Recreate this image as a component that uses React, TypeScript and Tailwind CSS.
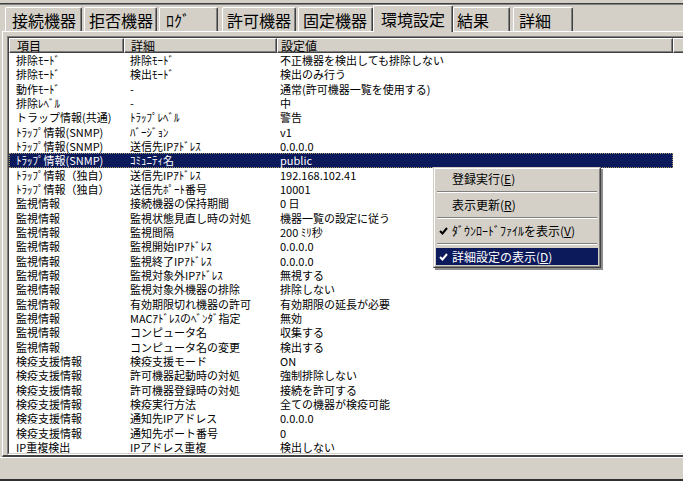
import React from 'react';

const rows: [string, string, string][] = [
  ['排除ﾓｰﾄﾞ', '排除ﾓｰﾄﾞ', '不正機器を検出しても排除しない'],
  ['排除ﾓｰﾄﾞ', '検出ﾓｰﾄﾞ', '検出のみ行う'],
  ['動作ﾓｰﾄﾞ', '-', '通常(許可機器一覧を使用する)'],
  ['排除ﾚﾍﾞﾙ', '-', '中'],
  ['トラップ情報(共通)', 'ﾄﾗｯﾌﾟﾚﾍﾞﾙ', '警告'],
  ['ﾄﾗｯﾌﾟ情報(SNMP)', 'ﾊﾞｰｼﾞｮﾝ', 'v1'],
  ['ﾄﾗｯﾌﾟ情報(SNMP)', '送信先IPｱﾄﾞﾚｽ', '0.0.0.0'],
  ['ﾄﾗｯﾌﾟ情報(SNMP)', 'ｺﾐｭﾆﾃｨ名', 'public'],
  ['ﾄﾗｯﾌﾟ情報（独自）', '送信先IPｱﾄﾞﾚｽ', '192.168.102.41'],
  ['ﾄﾗｯﾌﾟ情報（独自）', '送信先ﾎﾟｰﾄ番号', '10001'],
  ['監視情報', '接続機器の保持期間', '0 日'],
  ['監視情報', '監視状態見直し時の対処', '機器一覧の設定に従う'],
  ['監視情報', '監視間隔', '200 ﾐﾘ秒'],
  ['監視情報', '監視開始IPｱﾄﾞﾚｽ', '0.0.0.0'],
  ['監視情報', '監視終了IPｱﾄﾞﾚｽ', '0.0.0.0'],
  ['監視情報', '監視対象外IPｱﾄﾞﾚｽ', '無視する'],
  ['監視情報', '監視対象外機器の排除', '排除しない'],
  ['監視情報', '有効期限切れ機器の許可', '有効期限の延長が必要'],
  ['監視情報', 'MACｱﾄﾞﾚｽのﾍﾞﾝﾀﾞ指定', '無効'],
  ['監視情報', 'コンピュータ名', '収集する'],
  ['監視情報', 'コンピュータ名の変更', '検出する'],
  ['検疫支援情報', '検疫支援モード', 'ON'],
  ['検疫支援情報', '許可機器起動時の対処', '強制排除しない'],
  ['検疫支援情報', '許可機器登録時の対処', '接続を許可する'],
  ['検疫支援情報', '検疫実行方法', '全ての機器が検疫可能'],
  ['検疫支援情報', '通知先IPアドレス', '0.0.0.0'],
  ['検疫支援情報', '通知先ポート番号', '0'],
  ['IP重複検出', 'IPアドレス重複', '検出しない'],
];

// label, width, left padding, gap before
const tabs = [
  { label: '接続機器', w: 'w-[77px]', pl: 'pl-[6px]', ml: 'ml-0' },
  { label: '拒否機器', w: 'w-[73px]', pl: 'pl-[4px]', ml: 'ml-[2px]' },
  { label: 'ﾛｸﾞ', w: 'w-[59px]', pl: 'pl-[6px]', ml: 'ml-[2px]' },
  { label: '許可機器', w: 'w-[74px]', pl: 'pl-[4px]', ml: 'ml-[4px]' },
  { label: '固定機器', w: 'w-[75px]', pl: 'pl-[4px]', ml: 'ml-[2px]' },
  { label: '環境設定', w: 'w-[80px]', pl: 'pl-[7px]', ml: 'ml-0', active: true },
  { label: '結果', w: 'w-[57px]', pl: 'pl-[3px]', ml: 'ml-0' },
  { label: '詳細', w: 'w-[60px]', pl: 'pl-[5px]', ml: 'ml-[3px]' },
];

const Check = () => (
  <svg width="9" height="8" viewBox="0 0 9 8" className="absolute left-[3px] top-[5px]">
    <path d="M1 4 L3.5 6.5 L8 1" fill="none" stroke="currentColor" strokeWidth="2" />
  </svg>
);

const MenuItem: React.FC<{ text: string; acc: string; checked?: boolean; hot?: boolean }> = ({
  text,
  acc,
  checked,
  hot,
}) => (
  <div
    className={`relative h-[17px] flex items-center pl-[16px] text-[12px] leading-[17px] ${
      hot ? 'bg-[#0c1a5c] text-white' : 'text-black'
    }`}
  >
    {checked && <Check />}
    <span>
      {text}(<span className="underline">{acc}</span>)
    </span>
  </div>
);

const Sep = () => (
  <div className="h-[9px] flex flex-col justify-center px-px">
    <div className="h-px bg-[#808080]" />
    <div className="h-px bg-white" />
  </div>
);

export default function App() {
  return (
    <div className="w-[683px] h-[481px] overflow-hidden relative bg-[#d4d0c8] flex flex-col font-['Noto_Sans_CJK_JP','Liberation_Sans',sans-serif] text-black">
      <div className="h-[3px] shrink-0" />
      <div className="h-px bg-[#404040] shrink-0" />
      <div className="h-px bg-[#808080] shrink-0" />

      {/* tab strip */}
      <div className="h-[26px] shrink-0 flex items-end pl-[5px]">
        {tabs.map((t) => (
          <div
            key={t.label}
            className={`${t.w} ${t.ml} ${t.pl} ${
              t.active ? 'h-[27px] -mb-px relative z-10' : 'h-[24px]'
            } flex items-center text-[16px] leading-[20px] bg-[#d4d0c8] border-l border-t border-white border-r border-r-[#404040] rounded-t-[2px] shadow-[inset_-1px_0_#808080]`}
          >
            {t.label}
          </div>
        ))}
      </div>

      {/* tab page */}
      <div className="flex-1 ml-[2px] border-t border-l border-white border-b-2 border-b-[#404040] pt-[4px] pl-[4px] flex flex-col min-h-0">
        <div className="w-[700px] flex-1 flex flex-col min-h-0 border-t border-l border-[#808080] border-b border-b-white">
          <div className="flex-1 flex flex-col min-h-0 border-t border-l border-[#404040] border-b border-b-[#d4d0c8] bg-white">
            {/* header */}
            <div className="h-[15px] shrink-0 flex text-[12px] leading-[13px] bg-[#d4d0c8]">
              <div className="w-[115px] pl-[7px] flex items-center border-l border-t border-white border-r border-b border-r-[#404040] border-b-[#404040] shadow-[inset_-1px_-1px_#808080]">
                項目
              </div>
              <div className="w-[153px] pl-[6px] flex items-center border-l border-t border-white border-r border-b border-r-[#404040] border-b-[#404040] shadow-[inset_-1px_-1px_#808080]">
                詳細
              </div>
              <div className="w-[396px] pl-[3px] flex items-center border-l border-t border-white border-r border-b border-r-[#404040] border-b-[#404040] shadow-[inset_-1px_-1px_#808080]">
                設定値
              </div>
              <div className="flex-1 border-l border-t border-white border-b border-b-[#404040] shadow-[inset_0_-1px_#808080]" />
            </div>

            {/* rows */}
            <div className="flex-1 overflow-hidden min-h-0">
              {rows.map((r, i) => {
                const sel = i === 7;
                return (
                  <div key={i} className="h-[14.34px] flex">
                    <div
                      className={`w-[664px] flex items-center text-[11px] leading-[14px] ${
                        sel ? 'bg-[#0c1a5c] text-white outline-1 outline-dotted outline-[#a89c6c] -outline-offset-1' : ''
                      }`}
                    >
                      <div className="w-[115px] pl-[7px] whitespace-nowrap">{r[0]}</div>
                      <div className="w-[153px] pl-[6px] whitespace-nowrap">{r[1]}</div>
                      <div className="w-[396px] pl-[3px] whitespace-nowrap">{r[2]}</div>
                    </div>
                  </div>
                );
              })}
            </div>
          </div>
        </div>
      </div>

      {/* status bar */}
      <div className="h-[24px] shrink-0 border-t border-white border-b-2 border-b-[#303030] bg-[#d4d0c8]" />

      {/* context menu */}
      <div className="absolute left-[433px] top-[167px] w-[168px] border border-t-[#d4d0c8] border-l-[#d4d0c8] border-r-[#404040] border-b-[#404040] bg-[#d4d0c8] shadow-[2px_2px_0_rgba(0,0,0,0.45)]">
        <div className="border border-t-white border-l-white border-r-[#808080] border-b-[#808080] p-px">
          <MenuItem text="登録実行" acc="E" />
          <Sep />
          <MenuItem text="表示更新" acc="R" />
          <Sep />
          <MenuItem text="ﾀﾞｳﾝﾛｰﾄﾞﾌｧｲﾙを表示" acc="V" checked />
          <Sep />
          <MenuItem text="詳細設定の表示" acc="D" checked hot />
        </div>
      </div>
    </div>
  );
}
